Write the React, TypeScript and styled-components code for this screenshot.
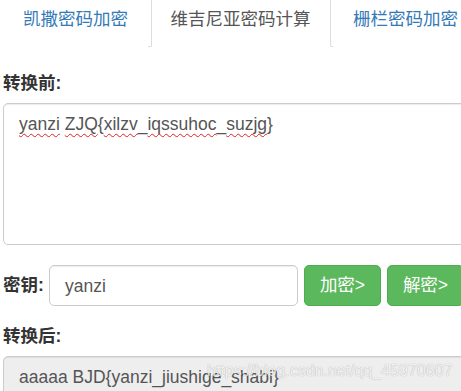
import React from 'react';
import styled, { createGlobalStyle } from 'styled-components';

const GlobalStyle = createGlobalStyle`
  html, body {
    margin: 0;
    padding: 0;
    background: #ffffff;
    overflow: hidden;
  }
  body {
    font-family: 'Liberation Sans', 'Noto Sans CJK SC', sans-serif;
    font-size: 17.5px;
    line-height: 25px;
    color: #333333;
  }
`;

const Page = styled.div`
  position: relative;
  width: 480px;
  height: 391px;
  overflow: hidden;
  padding-left: 3px;
  box-sizing: border-box;
`;

const TabBar = styled.ul`
  display: flex;
  margin: 0;
  padding: 0;
  list-style: none;
  border-bottom: 1px solid #dddddd;
`;

const Tab = styled.li<{ active?: boolean }>`
  margin: 0 2.5px -1px 0;
  padding: 7px 19px 14px;
  line-height: 25px;
  font-size: 17.5px;
  color: ${({ active }) => (active ? '#555555' : '#337ab7')};
  background: #ffffff;
  border-left: 1px solid ${({ active }) => (active ? '#dddddd' : 'transparent')};
  border-right: 1px solid ${({ active }) => (active ? '#dddddd' : 'transparent')};
  border-bottom: 1px solid ${({ active }) => (active ? '#ffffff' : 'transparent')};
  white-space: nowrap;
`;

const Label = styled.div<{ top: number }>`
  margin-top: ${({ top }) => top}px;
  margin-bottom: 7px;
  font-weight: 700;
  font-size: 17.5px;
  line-height: 25px;
  color: #333333;
`;

const TextBox = styled.div<{ readOnly?: boolean }>`
  width: 480px;
  height: ${({ readOnly }) => (readOnly ? '80px' : '142px')};
  box-sizing: border-box;
  padding: 7.5px 15px;
  border: 1px solid #cccccc;
  border-radius: 5px;
  background: ${({ readOnly }) => (readOnly ? '#eeeeee' : '#ffffff')};
  box-shadow: inset 0 1px 1px rgba(0, 0, 0, 0.075);
  color: #555555;
  font-size: 17.5px;
  line-height: 25px;
  white-space: nowrap;
`;

const Misspelled = styled.span`
  text-decoration: underline wavy #e02020;
  text-decoration-thickness: 1px;
  text-underline-offset: 3px;
  text-decoration-skip-ink: none;
`;

const KeyRow = styled.div`
  display: flex;
  align-items: center;
  margin-top: 20px;
  height: 41px;
`;

const KeyLabel = styled.span`
  width: 46px;
  font-weight: 700;
  color: #333333;
  white-space: nowrap;
`;

const KeyInput = styled.div`
  width: 249px;
  height: 41px;
  box-sizing: border-box;
  padding: 7.5px 15px;
  border: 1px solid #cccccc;
  border-radius: 5px;
  color: #555555;
  box-shadow: inset 0 1px 1px rgba(0, 0, 0, 0.075);
`;

const Button = styled.button`
  margin-left: 6px;
  width: 77px;
  height: 41px;
  flex-shrink: 0;
  box-sizing: border-box;
  padding: 0;
  border: 1px solid #4cae4c;
  border-radius: 5px;
  background: #5cb85c;
  color: #ffffff;
  font-family: 'Liberation Sans', 'Noto Sans CJK SC', sans-serif;
  font-size: 17.5px;
  line-height: 25px;
`;

const Watermark = styled.div`
  position: absolute;
  left: 207px;
  top: 362px;
  font-family: 'Liberation Sans', sans-serif;
  font-size: 16px;
  line-height: 18px;
  color: rgba(255, 255, 255, 0.85);
  text-shadow: 0 0 1px rgba(0, 0, 0, 0.35);
  white-space: nowrap;
  pointer-events: none;
`;

export default function App() {
  return (
    <Page>
      <GlobalStyle />
      <TabBar>
        <Tab>凯撒密码加密</Tab>
        <Tab active>维吉尼亚密码计算</Tab>
        <Tab>栅栏密码加密</Tab>
      </TabBar>

      <Label top={24}>转换前:</Label>
      <TextBox>
        <Misspelled>yanzi</Misspelled> <Misspelled>ZJQ</Misspelled>{'{'}
        <Misspelled>xilzv</Misspelled>_<Misspelled>iqssuhoc</Misspelled>_
        <Misspelled>suzjg</Misspelled>{'}'}
      </TextBox>

      <KeyRow>
        <KeyLabel>密钥:</KeyLabel>
        <KeyInput>yanzi</KeyInput>
        <Button>加密&gt;</Button>
        <Button>解密&gt;</Button>
      </KeyRow>

      <Label top={18}>转换后:</Label>
      <TextBox readOnly>aaaaa BJD{'{'}yanzi_jiushige_shabi{'}'}</TextBox>

      <Watermark>https://blog.csdn.net/qq_45970607</Watermark>
    </Page>
  );
}
